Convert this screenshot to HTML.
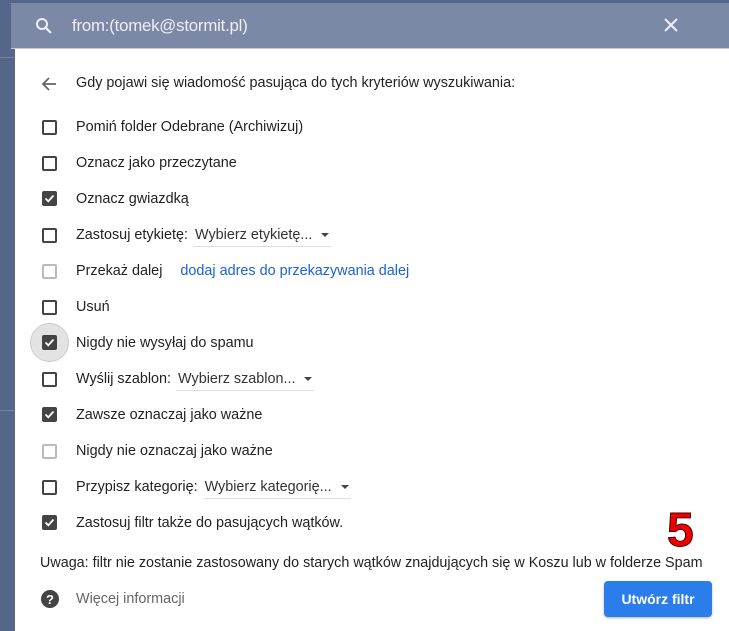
<!DOCTYPE html>
<html><head><meta charset="utf-8"><style>
body{margin:0;width:729px;height:631px;background:#56668a;position:relative;overflow:hidden;font-family:"Liberation Sans",sans-serif;}
.hdr{position:absolute;left:11px;top:3px;width:718px;height:45px;background:#7b88a6;border-bottom:1px solid #c8c8c8;}
.hdr .q{position:absolute;left:61px;top:13px;color:#eef0f5;font-size:16.8px;letter-spacing:-0.2px}
.panel{position:absolute;left:15px;top:49px;width:714px;height:582px;background:#fff;}
.line{position:absolute;left:0;width:15px;height:1px;background:#7282a3}
.row{position:absolute;left:76px;font-size:14.4px;color:#222;letter-spacing:0;line-height:16px}
.cb{position:absolute;left:42px;width:11px;height:11px;border:2px solid #444;border-radius:2px}
.cb.l{border-color:#bbb}
.cb.c{background:#444;width:15px;height:15px;border:0}
.cb.c svg{position:absolute;left:0;top:0}
.dd{display:inline-block;border-bottom:1px solid #ddd;padding:0 2px 3px 2px;color:#333;margin-left:5px}
.dd:after{content:"";display:inline-block;margin-left:9px;border:4px solid transparent;border-top-color:#444;border-bottom:0;vertical-align:middle}
.btn{position:absolute;left:604px;top:581px;width:108px;height:36px;background:#2b7de9;border-radius:4px;color:#fff;font-size:14px;font-weight:bold;text-align:center;line-height:36px;box-shadow:0 1px 2px rgba(0,0,0,.3)}
</style></head><body>
<div class="line" style="top:57px"></div><div class="line" style="top:410px"></div>
<div class="hdr">
<svg style="position:absolute;left:24px;top:14px" width="18" height="18" viewBox="0 0 18 18"><circle cx="7" cy="7" r="5" fill="none" stroke="#eef0f5" stroke-width="2"/><path d="M10.5 10.5L16 16" stroke="#eef0f5" stroke-width="2.2"/></svg>
<div class="q">from:(tomek@stormit.pl)</div>
<svg style="position:absolute;left:653px;top:15px" width="14" height="14" viewBox="0 0 14 14"><path d="M1 1L13 13M13 1L1 13" stroke="#eef0f5" stroke-width="2"/></svg>
</div>
<div class="panel"></div>
<svg style="position:absolute;left:41px;top:76px" width="16" height="16" viewBox="0 0 16 16"><path d="M15 8H2M8 2L2 8L8 14" fill="none" stroke="#666" stroke-width="1.8"/></svg>
<div class="row" style="top:75px">Gdy pojawi się wiadomość pasująca do tych kryteriów wyszukiwania:</div>

<div class="cb" style="top:120px"></div><div class="row" style="top:119px">Pomiń folder Odebrane (Archiwizuj)</div>
<div class="cb" style="top:156px"></div><div class="row" style="top:155px">Oznacz jako przeczytane</div>
<div class="cb c" style="top:191px"><svg width="15" height="15"><path d="M3.5 7.5L6.3 10.3L11.5 4.5" fill="none" stroke="#fff" stroke-width="1.8"/></svg></div><div class="row" style="top:191px">Oznacz gwiazdką</div>
<div class="cb" style="top:228px"></div><div class="row" style="top:227px">Zastosuj etykietę:<span class="dd">Wybierz etykietę...</span></div>
<div class="cb l" style="top:264px"></div><div class="row" style="top:263px">Przekaż dalej <span style="color:#1a62d6;margin-left:14px">dodaj adres do przekazywania dalej</span></div>
<div class="cb" style="top:300px"></div><div class="row" style="top:299px">Usuń</div>
<div style="position:absolute;left:30px;top:323px;width:39px;height:39px;border-radius:50%;background:#e3e3e3;border:1px solid #ccc;box-sizing:border-box"></div>
<div class="cb c" style="top:335px"><svg width="15" height="15"><path d="M3.5 7.5L6.3 10.3L11.5 4.5" fill="none" stroke="#fff" stroke-width="1.8"/></svg></div><div class="row" style="top:335px">Nigdy nie wysyłaj do spamu</div>
<div class="cb" style="top:372px"></div><div class="row" style="top:371px">Wyślij szablon:<span class="dd">Wybierz szablon...</span></div>
<div class="cb c" style="top:407px"><svg width="15" height="15"><path d="M3.5 7.5L6.3 10.3L11.5 4.5" fill="none" stroke="#fff" stroke-width="1.8"/></svg></div><div class="row" style="top:407px">Zawsze oznaczaj jako ważne</div>
<div class="cb l" style="top:444px"></div><div class="row" style="top:443px">Nigdy nie oznaczaj jako ważne</div>
<div class="cb" style="top:480px"></div><div class="row" style="top:479px">Przypisz kategorię:<span class="dd">Wybierz kategorię...</span></div>
<div class="cb c" style="top:515px"><svg width="15" height="15"><path d="M3.5 7.5L6.3 10.3L11.5 4.5" fill="none" stroke="#fff" stroke-width="1.8"/></svg></div><div class="row" style="top:515px">Zastosuj filtr także do pasujących wątków.</div>
<div style="position:absolute;left:667px;top:505px;font-size:48px;font-weight:bold;color:#e00;-webkit-text-stroke:1px #400;line-height:52px">5</div>
<div class="row" style="left:40px;top:555px;font-size:14.35px">Uwaga: filtr nie zostanie zastosowany do starych wątków znajdujących się w Koszu lub w folderze Spam</div>
<svg style="position:absolute;left:41px;top:590px" width="18" height="18" viewBox="0 0 18 18"><circle cx="9" cy="9" r="9" fill="#444"/><text x="9" y="14" font-size="13" font-weight="bold" fill="#fff" text-anchor="middle" font-family="Liberation Sans">?</text></svg>
<div class="row" style="top:591px;color:#666">Więcej informacji</div>
<div class="btn">Utwórz filtr</div>
</body></html>
